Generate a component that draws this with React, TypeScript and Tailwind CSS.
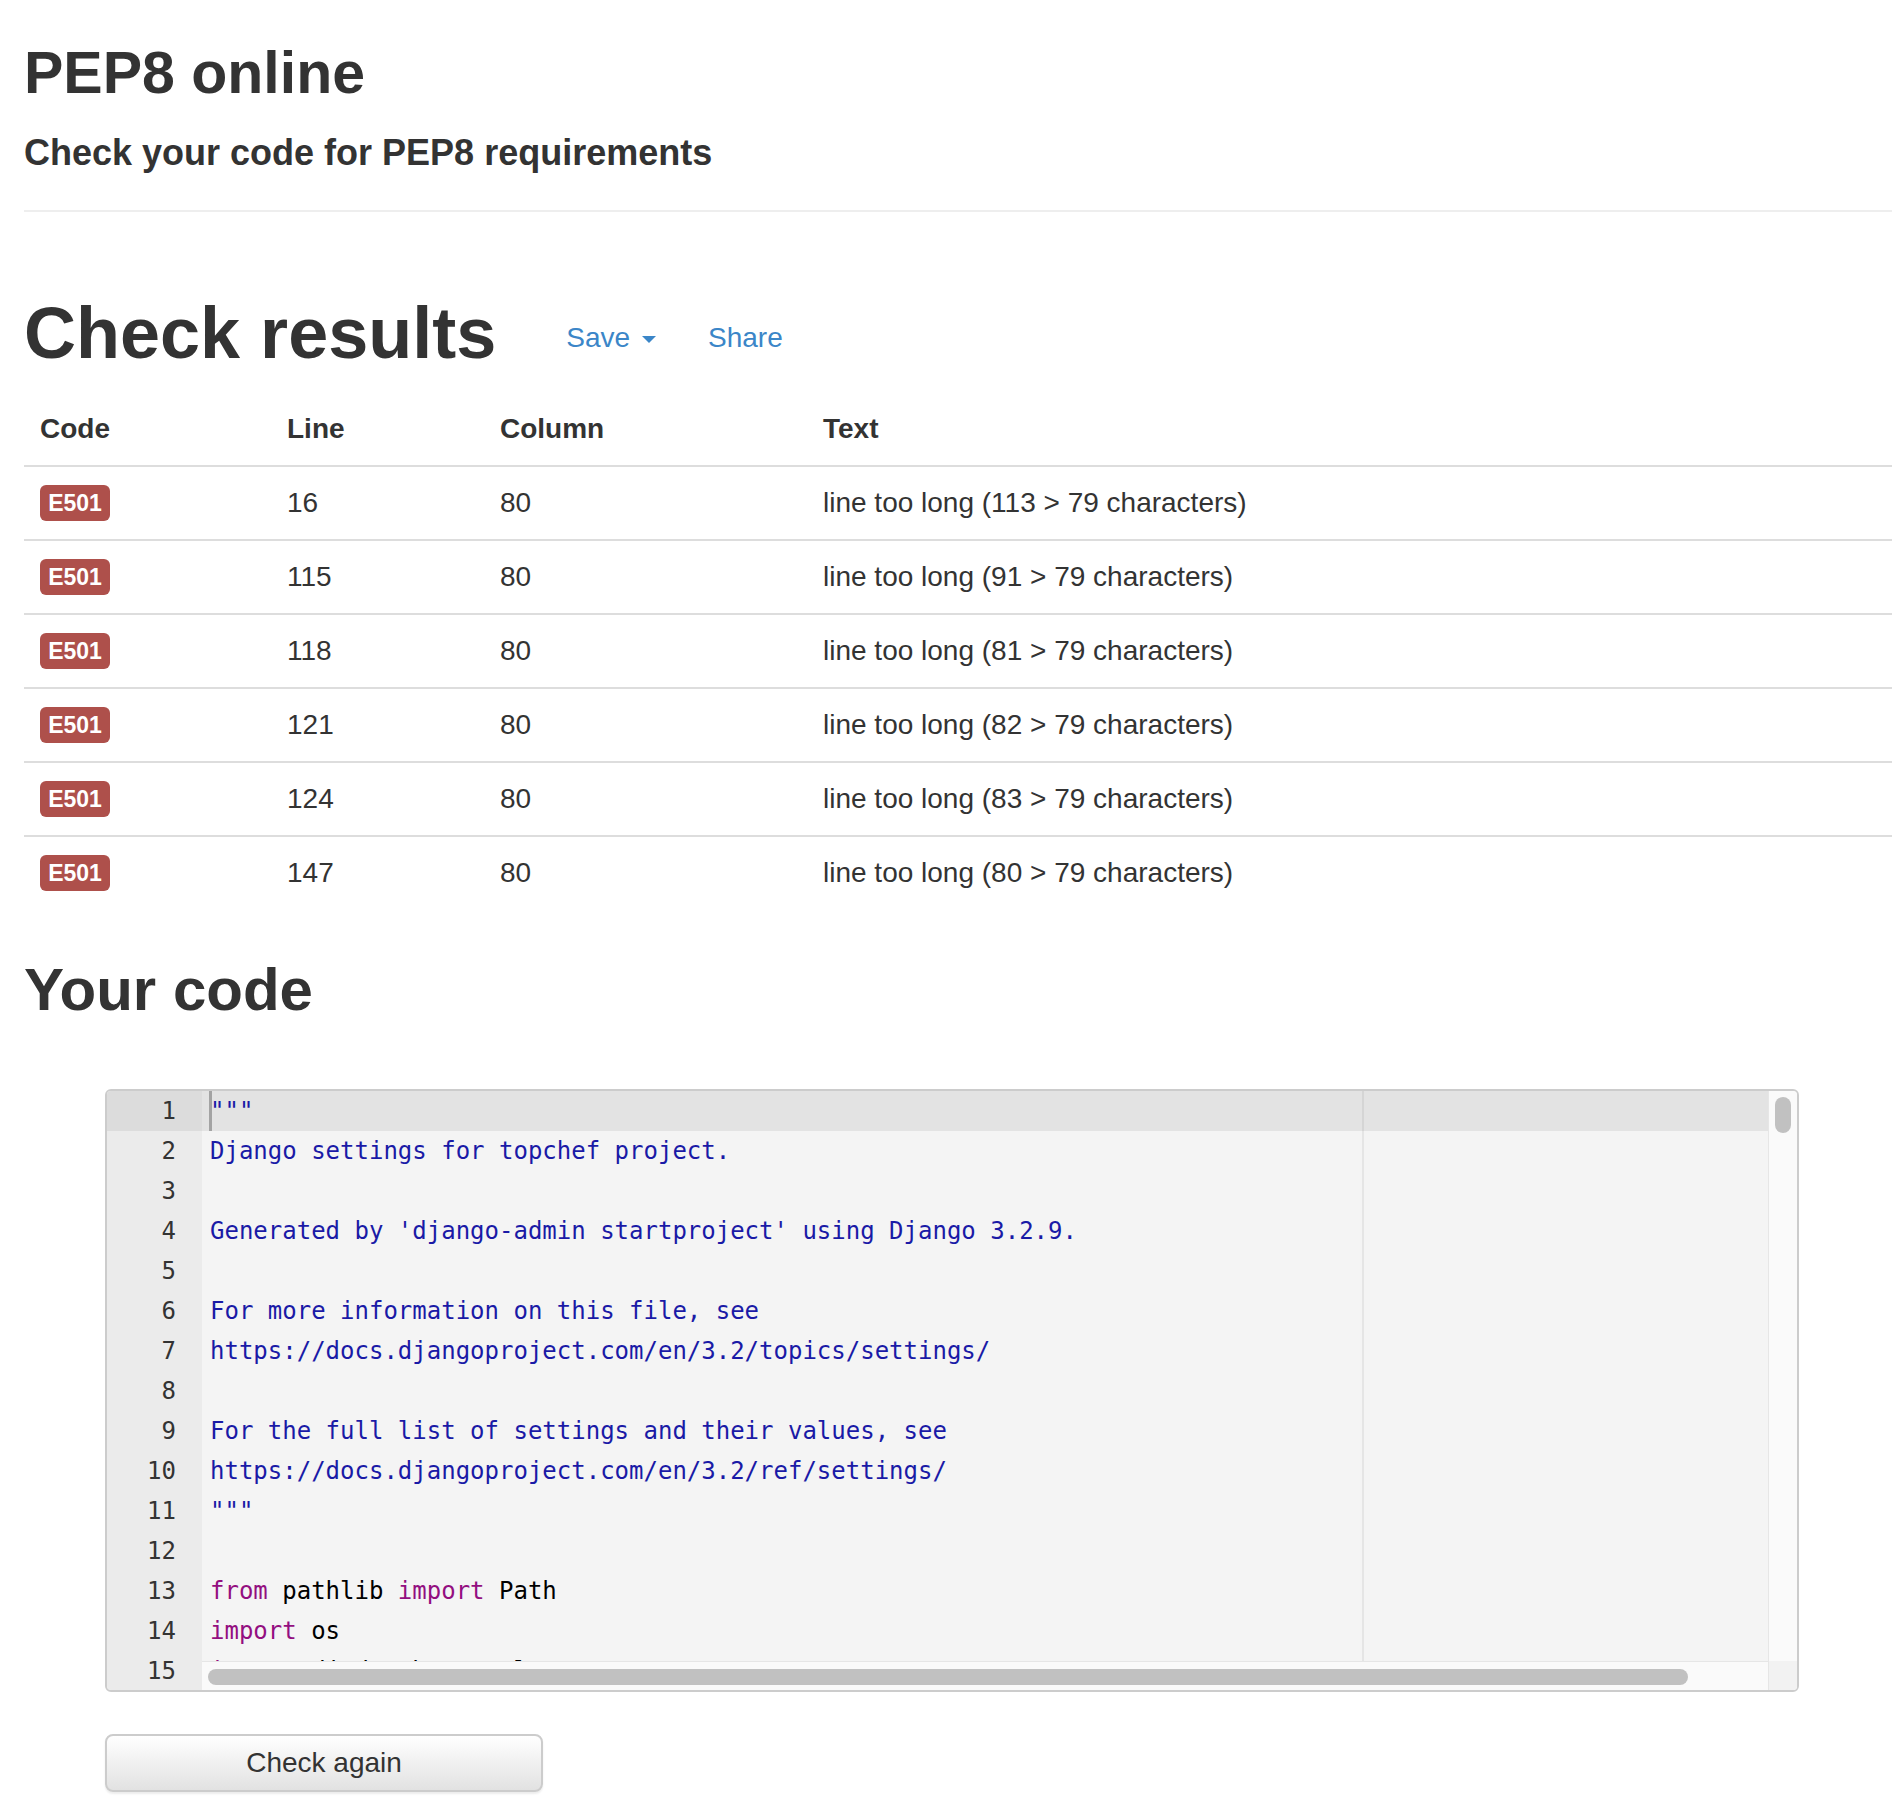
import React from "react";

type Tok = { t: string; c?: "s" | "k" };

const codeLines: Tok[][] = [
  [{ t: '"""', c: "s" }],
  [{ t: "Django settings for topchef project.", c: "s" }],
  [],
  [{ t: "Generated by 'django-admin startproject' using Django 3.2.9.", c: "s" }],
  [],
  [{ t: "For more information on this file, see", c: "s" }],
  [{ t: "https://docs.djangoproject.com/en/3.2/topics/settings/", c: "s" }],
  [],
  [{ t: "For the full list of settings and their values, see", c: "s" }],
  [{ t: "https://docs.djangoproject.com/en/3.2/ref/settings/", c: "s" }],
  [{ t: '"""', c: "s" }],
  [],
  [{ t: "from", c: "k" }, { t: " pathlib " }, { t: "import", c: "k" }, { t: " Path" }],
  [{ t: "import", c: "k" }, { t: " os" }],
  [{ t: "import", c: "k" }, { t: " dj_database_url" }],
];

const results = [
  { line: "16", col: "80", text: "line too long (113 > 79 characters)" },
  { line: "115", col: "80", text: "line too long (91 > 79 characters)" },
  { line: "118", col: "80", text: "line too long (81 > 79 characters)" },
  { line: "121", col: "80", text: "line too long (82 > 79 characters)" },
  { line: "124", col: "80", text: "line too long (83 > 79 characters)" },
  { line: "147", col: "80", text: "line too long (80 > 79 characters)" },
];

function tokClass(c?: "s" | "k") {
  if (c === "s") return "text-[#1a1aa6]";
  if (c === "k") return "text-[#930f80]";
  return "text-black";
}

export default function App() {
  return (
    <div className="min-h-[1818px] bg-white pl-[24px] text-[#333333] font-['Liberation_Sans',Arial,sans-serif]">
      {/* Header */}
      <h2 className="mt-[40px] text-[59px] leading-[66px] font-bold">PEP8 online</h2>
      <h4 className="mt-[27px] text-[36px] leading-[40px] font-bold">
        Check your code for PEP8 requirements
      </h4>
      <div className="mt-[37px] border-t-2 border-[#eeeeee]" />

      {/* Check results heading */}
      <div className="mt-[82px] flex items-start">
        <h1 className="text-[72px] leading-[79px] font-bold">Check results</h1>
        <a className="ml-[70px] mt-[24px] text-[28px] leading-[40px] text-[#3b86c8] flex items-center cursor-pointer">
          Save
          <span className="ml-[12px] mt-[2px] inline-block w-0 h-0 border-x-[7px] border-x-transparent border-t-[7px] border-t-[#3b86c8]" />
        </a>
        <a className="ml-[52px] mt-[24px] text-[28px] leading-[40px] text-[#3b86c8] cursor-pointer">Share</a>
      </div>

      {/* Results table */}
      <div className="mt-[20px] text-[28px] leading-[40px]">
        <div className="grid grid-cols-[247px_213px_323px_1fr] border-b-2 border-[#dddddd] font-bold">
          <div className="p-[16px]">Code</div>
          <div className="p-[16px]">Line</div>
          <div className="p-[16px]">Column</div>
          <div className="p-[16px]">Text</div>
        </div>
        {results.map((r, i) => (
          <div
            key={i}
            className={`grid grid-cols-[247px_213px_323px_1fr] ${i > 0 ? "border-t-2 border-[#dddddd]" : ""}`}
          >
            <div className="p-[16px] flex items-center h-[72px]">
              <span className="inline-flex items-center justify-center w-[70px] h-[36px] rounded-[6px] bg-[#ae504b] text-white font-bold text-[23px] leading-none">
                E501
              </span>
            </div>
            <div className="p-[16px]">{r.line}</div>
            <div className="p-[16px]">{r.col}</div>
            <div className="p-[16px]">{r.text}</div>
          </div>
        ))}
      </div>

      {/* Your code */}
      <h2 className="mt-[48px] text-[60px] leading-[66px] font-bold">Your code</h2>

      <div className="ml-[81px] mt-[66px] w-[1694px] h-[603px] border-2 border-[#cccccc] rounded-[6px] overflow-hidden flex bg-[#f4f4f4] font-['DejaVu_Sans_Mono',Menlo,monospace] text-[24px] leading-[40px]">
        {/* Gutter */}
        <div className="w-[95px] shrink-0 bg-[#ebebeb] text-[#333333] text-right overflow-hidden">
          {codeLines.map((_, i) => (
            <div key={i} className={`h-[40px] pr-[26px] ${i === 0 ? "bg-[#dcdcdc]" : ""}`}>
              {i + 1}
            </div>
          ))}
        </div>

        {/* Code area */}
        <div className="flex-1 min-w-0 flex flex-col">
          <div className="flex-1 relative overflow-hidden">
            {codeLines.map((toks, i) => (
              <div key={i} className={`h-[40px] pl-[8px] whitespace-pre ${i === 0 ? "bg-[#e3e3e3]" : ""}`}>
                {toks.map((tk, j) => (
                  <span key={j} className={tokClass(tk.c)}>
                    {tk.t}
                  </span>
                ))}
              </div>
            ))}
            {/* print margin */}
            <div className="absolute top-0 bottom-0 left-[1160px] w-[2px] bg-black/[0.06]" />
            {/* cursor */}
            <div className="absolute top-0 left-[7px] w-[3px] h-[40px] bg-[#a3a3a3]" />
          </div>
          {/* horizontal scrollbar */}
          <div className="h-[29px] shrink-0 border-t border-[#e6e6e6] bg-[#fafafa] pt-[7px] pl-[6px]">
            <div className="w-[1480px] h-[16px] rounded-full bg-[#c1c1c1]" />
          </div>
        </div>

        {/* vertical scrollbar */}
        <div className="w-[29px] shrink-0 flex flex-col border-l border-[#e6e6e6] bg-[#fafafa]">
          <div className="flex-1 pt-[6px] pl-[6px]">
            <div className="w-[16px] h-[36px] rounded-full bg-[#c1c1c1]" />
          </div>
          <div className="h-[29px] bg-[#f2f2f2]" />
        </div>
      </div>

      <button className="ml-[81px] mt-[42px] w-[438px] h-[58px] rounded-[8px] border-2 border-[#cccccc] bg-linear-to-b from-white to-[#e2e2e2] text-[28px] leading-[40px] text-[#333333] shadow-[0_2px_2px_rgba(0,0,0,0.075)]">
        Check again
      </button>
    </div>
  );
}
